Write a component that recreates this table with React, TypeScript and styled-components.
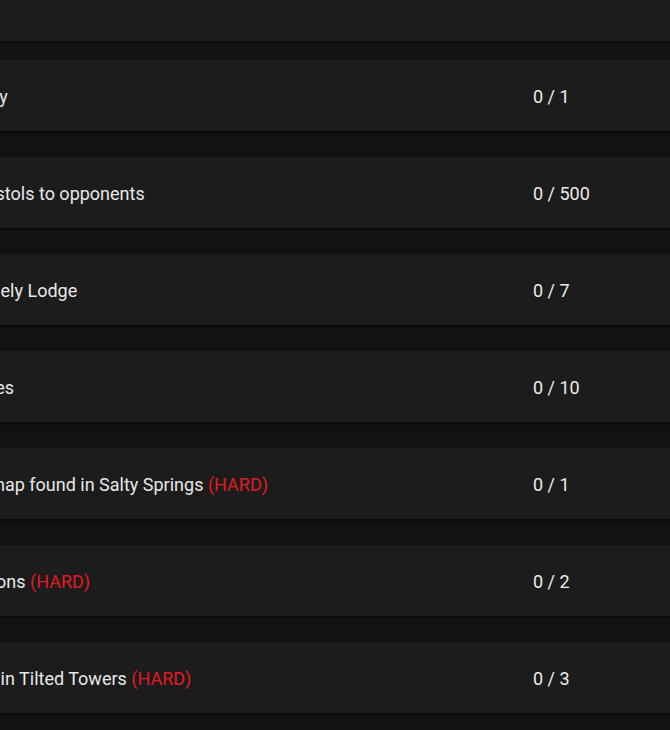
import React from 'react';
import styled, { createGlobalStyle } from 'styled-components';

interface Challenge {
  id: number;
  title: string;
  hard?: boolean;
  done: number;
  total: number;
}

const GlobalStyle = createGlobalStyle`
  html, body {
    margin: 0;
    padding: 0;
    background: #121212;
    overflow: hidden;
  }
  body {
    font-family: Roboto, "Liberation Sans", Arial, sans-serif;
  }
`;

const Page = styled.div`
  width: 670px;
  height: 730px;
  overflow: hidden;
  background: #121212;
`;

// the list is wider than the window, its left part lies out of view
const List = styled.div`
  display: flex;
  flex-direction: column;
  gap: 26px;
  width: 1000px;
  margin-left: -188px;
`;

const Header = styled.div`
  height: 41px;
  margin-bottom: -7px;
  background: #1c1c1c;
  box-shadow: 0 1px 2px rgba(0, 0, 0, 0.5);
`;

const Row = styled.div`
  display: grid;
  grid-template-columns: 701px 1fr;
  align-items: center;
  height: 71px;
  padding-left: 20px;
  background: #1c1c1c;
  box-shadow: 0 2px 2px rgba(0, 0, 0, 0.45);
`;

const Title = styled.div`
  color: #e8e8e8;
  font-size: 18px;
  white-space: nowrap;
  padding-top: 1px;
`;

const Hard = styled.span`
  color: #e11b24;
`;

const Count = styled.div`
  color: #ececec;
  font-size: 18px;
  white-space: nowrap;
  padding-top: 1px;
`;

const challenges: Challenge[] = [
  { id: 1, title: 'Score a Squad Victory', done: 0, total: 1 },
  { id: 2, title: 'Deal damage with Pistols to opponents', done: 0, total: 500 },
  { id: 3, title: 'Search Chests in Lonely Lodge', done: 0, total: 7 },
  { id: 4, title: 'Play in Squad Matches', done: 0, total: 10 },
  { id: 5, title: 'Follow the treasure map found in Salty Springs', hard: true, done: 0, total: 1 },
  { id: 6, title: 'Sniper Rifle Eliminations', hard: true, done: 0, total: 2 },
  { id: 7, title: 'Eliminate opponents in Tilted Towers', hard: true, done: 0, total: 3 },
];

const App: React.FC = () => {
  return (
    <Page>
      <GlobalStyle />
      <List>
        <Header />
        {challenges.map(c => (
          <Row key={c.id}>
            <Title>
              {c.title}
              {c.hard && <Hard> (HARD)</Hard>}
            </Title>
            <Count>
              {c.done} / {c.total}
            </Count>
          </Row>
        ))}
      </List>
    </Page>
  );
};

export default App;
